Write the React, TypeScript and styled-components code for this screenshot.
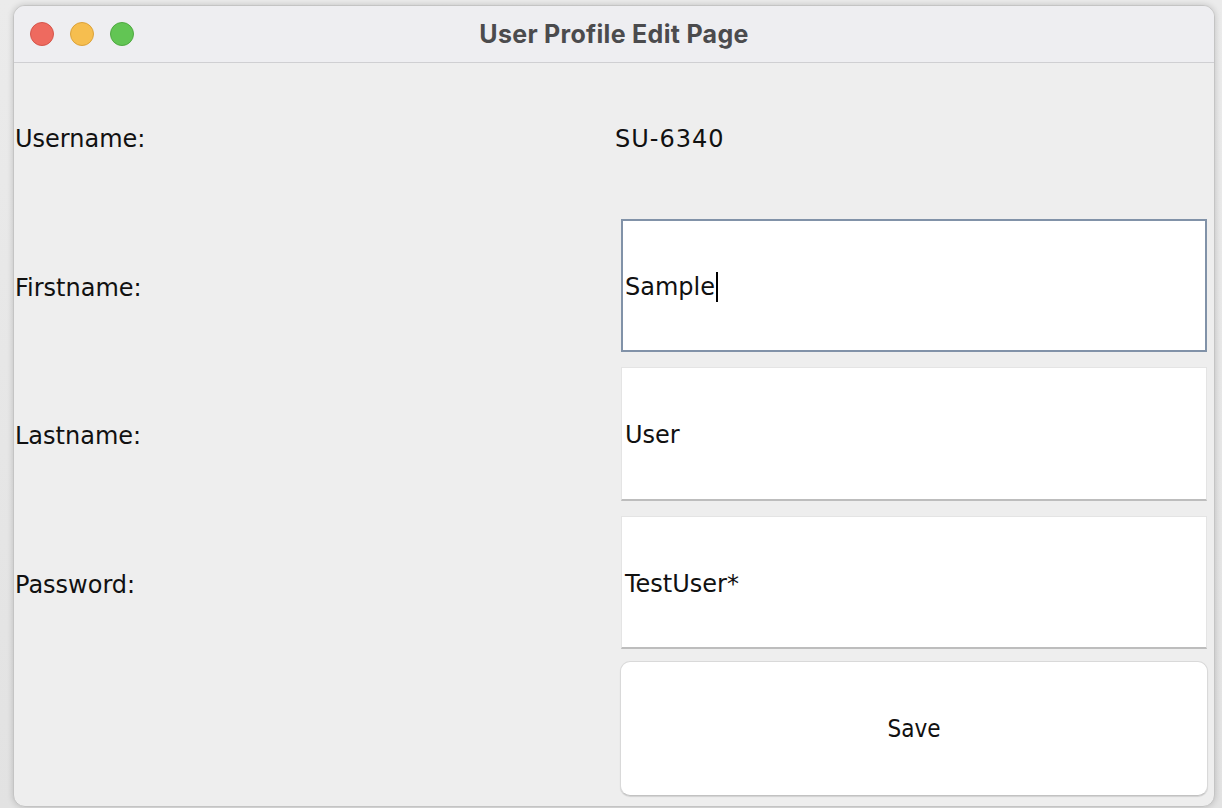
import styled, { createGlobalStyle } from "styled-components";

const GlobalStyle = createGlobalStyle`
    html, body {
        margin: 0;
        padding: 0;
        background: #e4e4e4;
        width: 1222px;
        height: 808px;
        overflow: hidden;
    }
    * {
        box-sizing: border-box;
    }
`

const Desktop = styled.div`
    width: 1222px;
    height: 808px;
    padding: 5px 7px 0 13px;
    background: linear-gradient(180deg, #ebebeb 0%, #e2e2e2 100%);
`

const Window = styled.div`
    width: 1202px;
    height: 802px;
    display: flex;
    flex-direction: column;
    border: 1px solid #c4c4c4;
    border-radius: 12px;
    overflow: hidden;
    background: #eeeeee;
    box-shadow: 0 0 6px rgba(0, 0, 0, 0.18);
`

const TitleBar = styled.div`
    position: relative;
    height: 57px;
    flex-shrink: 0;
    display: flex;
    align-items: center;
    justify-content: center;
    background: #eeeef1;
    border-bottom: 1px solid #cfcfd2;
`

const Lights = styled.div`
    position: absolute;
    left: 16px;
    top: 16px;
    display: flex;
    gap: 16px;
`

const Light = styled.span<{ $fill: string; $edge: string }>`
    width: 24px;
    height: 24px;
    border-radius: 50%;
    background: ${p => p.$fill};
    border: 1px solid ${p => p.$edge};
`

const Title = styled.div`
    font-family: Inter, "Liberation Sans", sans-serif;
    font-weight: 700;
    font-size: 25px;
    color: #4b4b4d;
    letter-spacing: 0.3px;
`

const Form = styled.div`
    flex: 1;
    display: grid;
    grid-template-columns: 600px 600px;
    grid-template-rows: repeat(5, 1fr);
`

const Label = styled.div`
    display: flex;
    align-items: center;
    padding: 4px 0 0 1px;
    font-family: "DejaVu Sans", Verdana, sans-serif;
    font-size: 24px;
    color: #111;
`

const Value = styled(Label)`
    letter-spacing: 1px;
`

const FieldCell = styled.div`
    padding: 7px 7px 8px 7px;
    display: flex;
`

const Field = styled.div<{ $focused?: boolean }>`
    flex: 1;
    display: flex;
    align-items: center;
    padding-top: 3px;
    background: #fff;
    font-family: "DejaVu Sans", Verdana, sans-serif;
    font-size: 24px;
    color: #111;
    border: ${p => (p.$focused ? "2px solid #8192a8" : "1px solid #e4e4e4")};
    border-bottom: ${p => (p.$focused ? "2px solid #8192a8" : "2px solid #bdbdbd")};
    padding-left: ${p => (p.$focused ? "2px" : "3px")};
`

const Caret = styled.span`
    display: inline-block;
    width: 2px;
    height: 30px;
    margin-left: 1px;
    background: #000;
`

const ButtonCell = styled.div`
    padding: 4px 6px 10px 6px;
    display: flex;
`

const SaveButton = styled.button`
    flex: 1;
    padding-top: 2px;
    background: #fff;
    border: 1px solid #d9d9d9;
    border-bottom-color: #c2c2c2;
    border-radius: 10px;
    box-shadow: 0 1px 1px rgba(0, 0, 0, 0.12);
    font-family: "DejaVu Sans Condensed", "DejaVu Sans", sans-serif;
    font-size: 24px;
    color: #111;
    cursor: pointer;
`

export default function App() {
    return (
        <>
            <GlobalStyle />
            <Desktop>
                <Window>
                    <TitleBar>
                        <Lights>
                            <Light $fill="#ee6a5f" $edge="#d5554b" />
                            <Light $fill="#f6be4f" $edge="#dca23a" />
                            <Light $fill="#62c554" $edge="#4fa941" />
                        </Lights>
                        <Title>User Profile Edit Page</Title>
                    </TitleBar>
                    <Form>
                        <Label>Username:</Label>
                        <Value>SU-6340</Value>

                        <Label>Firstname:</Label>
                        <FieldCell>
                            <Field $focused>Sample<Caret /></Field>
                        </FieldCell>

                        <Label>Lastname:</Label>
                        <FieldCell>
                            <Field>User</Field>
                        </FieldCell>

                        <Label>Password:</Label>
                        <FieldCell>
                            <Field>TestUser*</Field>
                        </FieldCell>

                        <div />
                        <ButtonCell>
                            <SaveButton>Save</SaveButton>
                        </ButtonCell>
                    </Form>
                </Window>
            </Desktop>
        </>
    )
}
